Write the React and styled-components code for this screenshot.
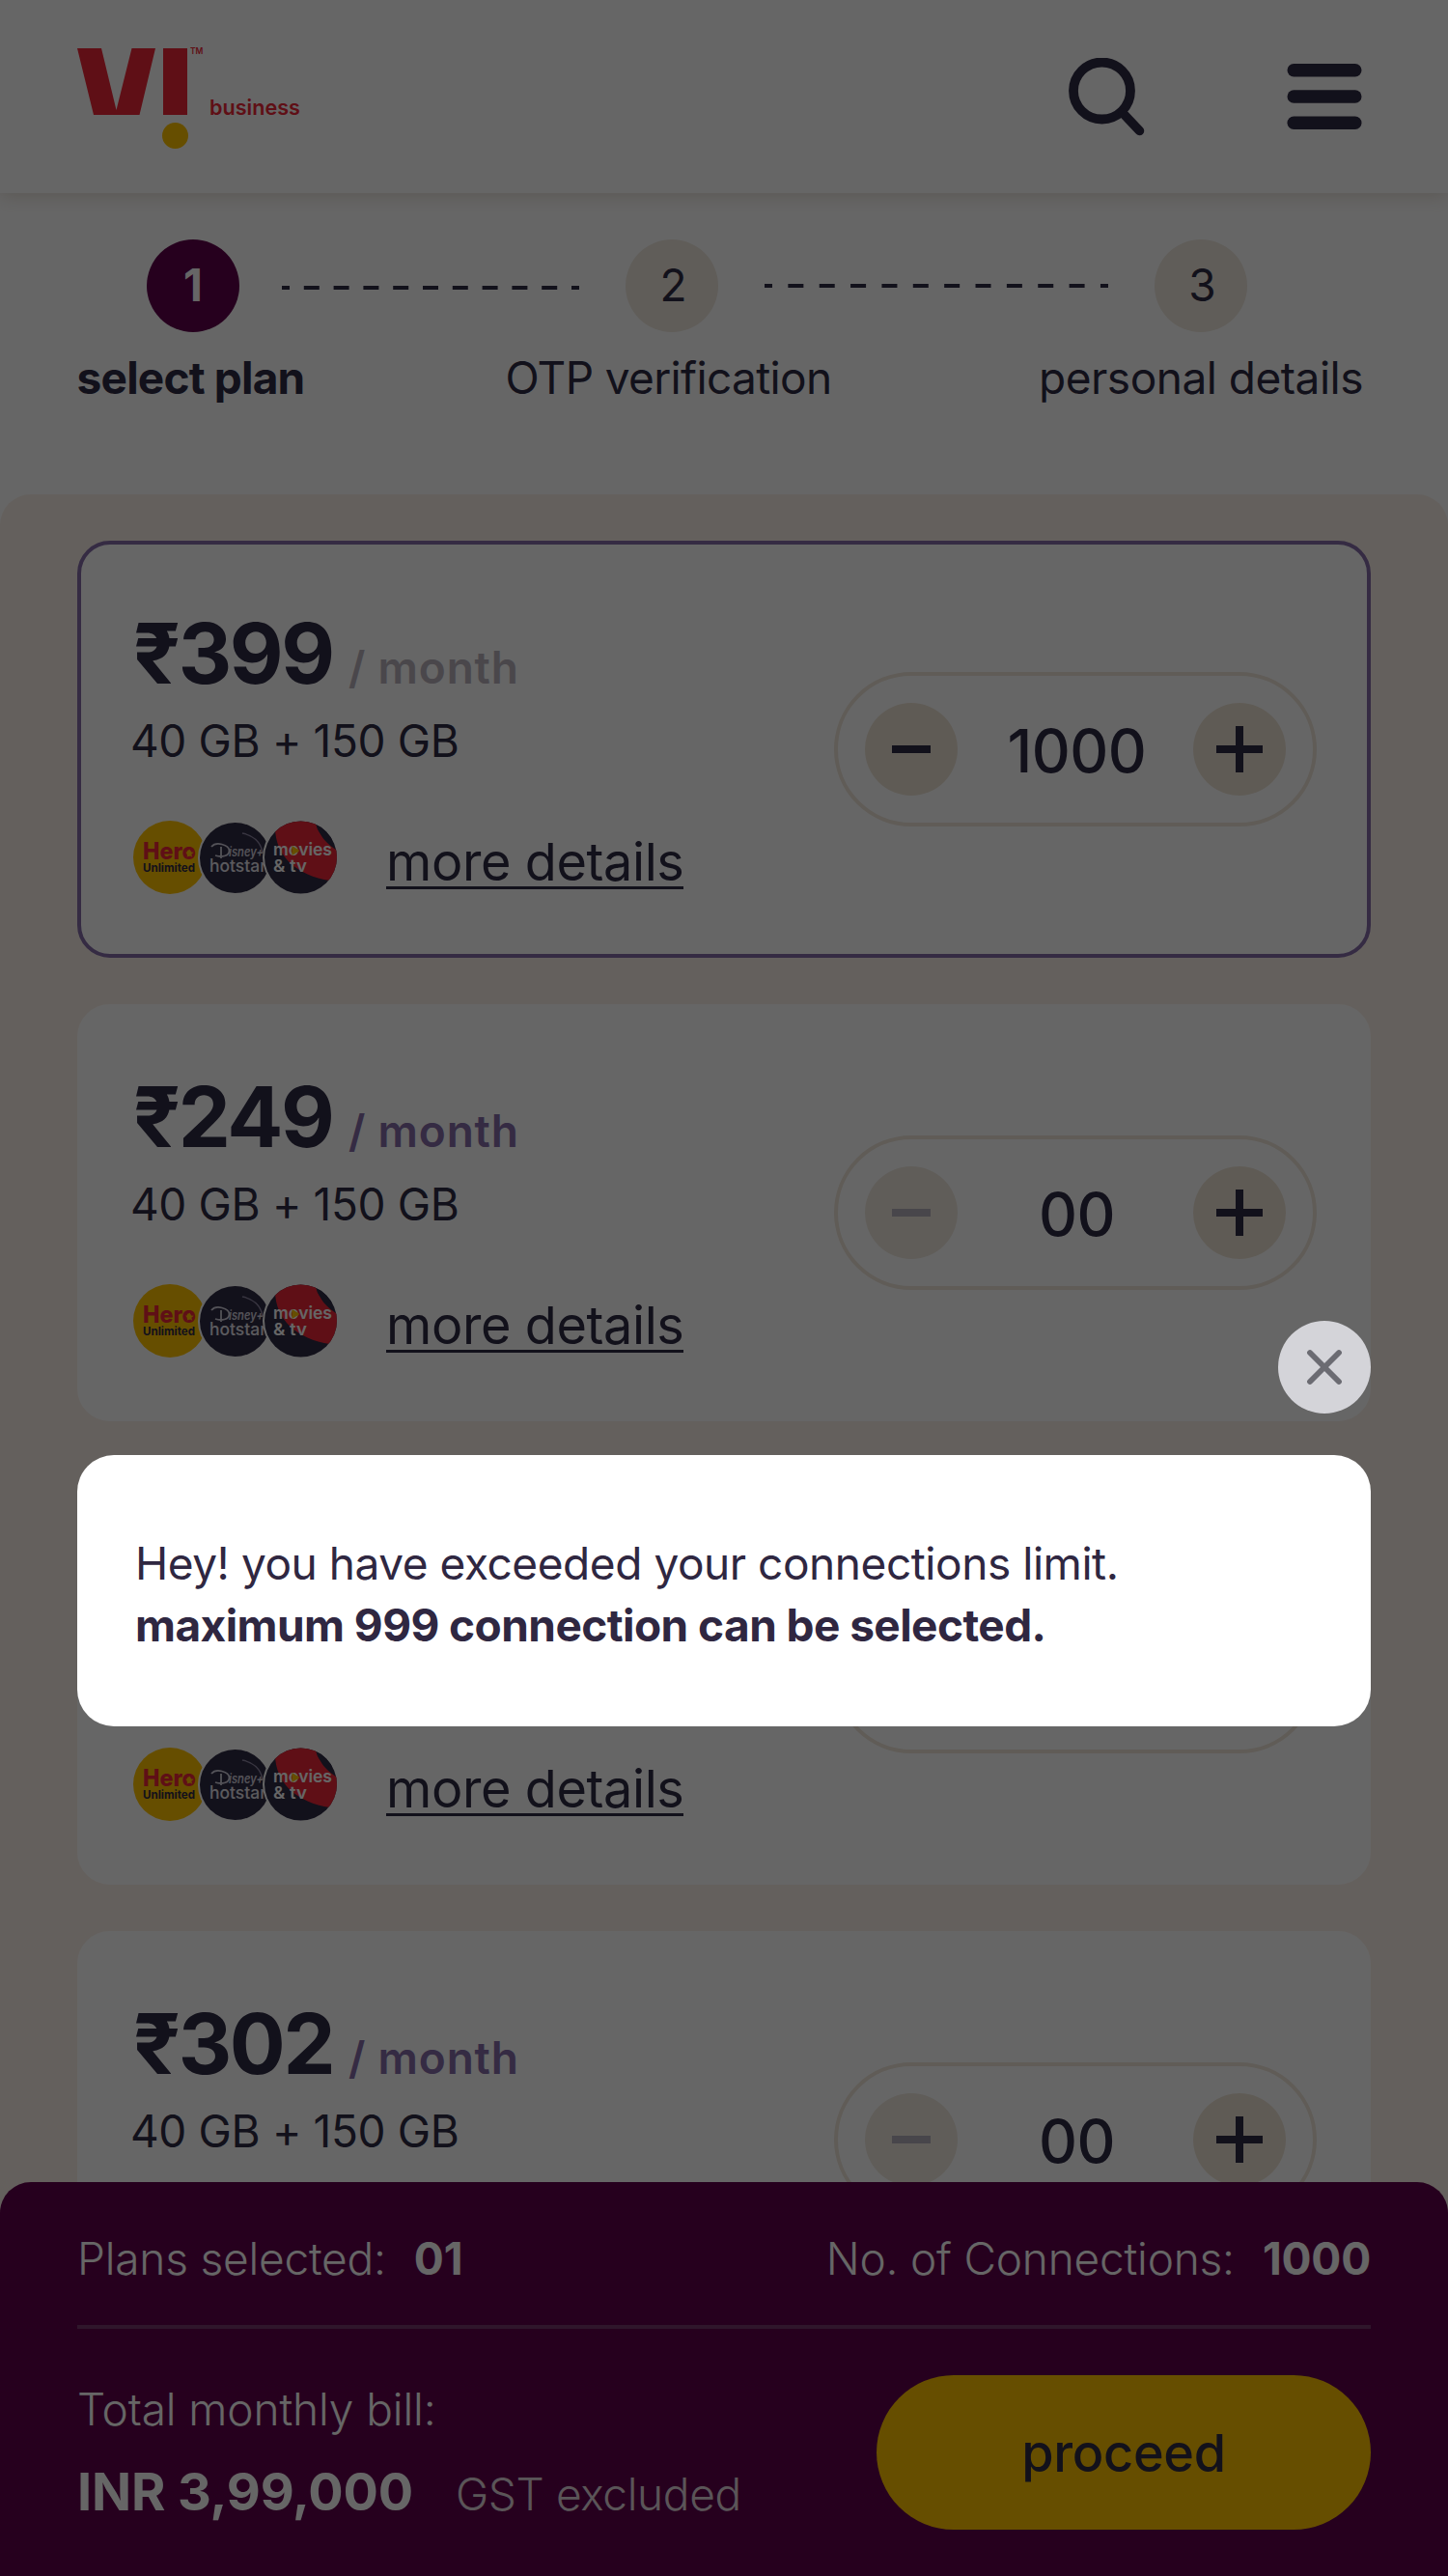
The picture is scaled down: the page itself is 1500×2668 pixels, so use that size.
import styled, { createGlobalStyle } from "styled-components";

const plans = [
  { price: "399", count: "1000", selected: true },
  { price: "249", count: "00" },
  { price: "299", count: "00" },
  { price: "302", count: "00" },
];

const App = () => {
  return (
    <Page>
      <GlobalStyle />
      <Header>
        <Logo />
        <HeaderIcons>
          <SearchIcon />
          <MenuIcon />
        </HeaderIcons>
      </Header>
      <Steps>
        <Step $width={240}>
          <StepCircle $active>1</StepCircle>
          <StepLabel $bold $spacing={-0.8} $shift={-5}>select plan</StepLabel>
        </Step>
        <Dashes width={308} gap={14.8} margin="48px -76px 0 -28px" />
        <Step $width={344}>
          <StepCircle>2</StepCircle>
          <StepLabel $spacing={-0.65} $shift={-7}>OTP verification</StepLabel>
        </Step>
        <Dashes width={356} gap={16.36} margin="46px -76px 0" />
        <Step $width={344}>
          <StepCircle>3</StepCircle>
          <StepLabel $spacing={-0.5} $shift={0}>personal details</StepLabel>
        </Step>
      </Steps>
      <PlanList>
        {plans.map((plan) => (
          <PlanCard key={plan.price} plan={plan} />
        ))}
      </PlanList>
      <Summary>
        <SummaryRow>
          <SummaryText $spacing={-0.2}>Plans selected:<SummaryValue>01</SummaryValue></SummaryText>
          <SummaryText $spacing={-0.2}>No. of Connections:<SummaryValue>1000</SummaryValue></SummaryText>
        </SummaryRow>
        <BillRow>
          <div>
            <BillLabel>Total monthly bill:</BillLabel>
            <BillLine>
              <BillTotal>INR 3,99,000</BillTotal>
              <BillNote>GST excluded</BillNote>
            </BillLine>
          </div>
          <ProceedButton>proceed</ProceedButton>
        </BillRow>
      </Summary>
      <Overlay>
        <CloseButton>
          <svg width="40" height="40" viewBox="0 0 40 40">
            <path d="M5 5 L35 35 M35 5 L5 35" stroke="#6b6b72" strokeWidth="5.8" strokeLinecap="round" />
          </svg>
        </CloseButton>
        <Modal>
          <ModalText $spacing={-0.45}>Hey! you have exceeded your connections limit.</ModalText>
          <ModalText $bold $spacing={-0.56}>maximum 999 connection can be selected.</ModalText>
        </Modal>
      </Overlay>
    </Page>
  );
};

export default App;

const PlanCard = ({ plan }) => {
  return (
    <Card $selected={plan.selected}>
      <div>
        <PriceLine>
          <Price>₹{plan.price}</Price>
          <Period $muted={plan.selected}>/ month</Period>
        </PriceLine>
        <Data>40 GB + 150 GB</Data>
        <Perks>
          <PerkBadges />
          <MoreLink>more details</MoreLink>
        </Perks>
      </div>
      <Stepper>
        <RoundButton $disabled={!plan.selected}>
          <svg width="48" height="48">
            <path d="M4 24 H44" stroke="currentColor" strokeWidth="8" />
          </svg>
        </RoundButton>
        <Count>{plan.count}</Count>
        <RoundButton>
          <svg width="48" height="48">
            <path d="M0 24 H48 M24 0 V48" stroke="currentColor" strokeWidth="8" />
          </svg>
        </RoundButton>
      </Stepper>
    </Card>
  );
};

const Logo = () => (
  <LogoSvg width="240" height="110" viewBox="80 48 240 110">
    <path d="M80 50 H105 L120.5 114 L136.5 50 H161 L144.5 119 H97 Z" fill="#ee2737" />
    <rect x="169" y="50" width="25" height="69" fill="#ee2737" />
    <circle cx="181.5" cy="140.5" r="13.5" fill="#ffc300" />
    <text x="197" y="56" fontSize="8.5" fontWeight="600" fill="#ee2737">TM</text>
    <text x="217" y="119" fontSize="22" fontWeight="600" fill="#ee2737" textLength="94" lengthAdjust="spacingAndGlyphs">business</text>
  </LogoSvg>
);

const SearchIcon = () => (
  <svg width="80" height="82" viewBox="0 0 80 82" fill="none" stroke="#2f2b44">
    <circle cx="34.5" cy="34" r="29.5" strokeWidth="9.8" />
    <path d="M56 57 L73.5 75.5" strokeWidth="9.5" strokeLinecap="round" />
  </svg>
);

const MenuIcon = () => (
  <svg width="78" height="68" viewBox="0 0 78 68" fill="#2f2b44">
    <rect x="0.5" y="0" width="77" height="13.5" rx="6.7" />
    <rect x="0.5" y="27.2" width="77" height="13.5" rx="6.7" />
    <rect x="0.5" y="54.5" width="77" height="13.5" rx="6.7" />
  </svg>
);

const Dashes = ({ width, gap, margin }) => (
  <DashSvg width={width} height="4" $margin={margin}>
    <path
      d={`M0 2 H${width}`}
      stroke="#2f2b44"
      strokeWidth="4"
      strokeDasharray={`16 ${gap}`}
      strokeDashoffset="8"
    />
  </DashSvg>
);

const PerkBadges = () => (
  <BadgeSvg width="212" height="78" viewBox="0 0 212 78">
    <defs>
      <clipPath id="movies"><circle cx="173.5" cy="39" r="37.5" /></clipPath>
      <clipPath id="disney"><circle cx="105.5" cy="39.5" r="36.5" /></clipPath>
    </defs>
    <circle cx="38" cy="39" r="38" fill="#ffc300" />
    <text x="10" y="41" fontSize="24" fontWeight="800" fill="#ee2737" textLength="55" lengthAdjust="spacingAndGlyphs">Hero</text>
    <path d="M58.4 30.5 l1.2 3 3.2 .2 -2.5 2 .9 3 -2.8 -1.7 -2.7 1.7 .9 -3 -2.5 -2 3.2 -.2z" fill="#ffc300" />
    <text x="10" y="53.5" fontSize="12" fontWeight="700" fill="#2f2b44" textLength="54" lengthAdjust="spacingAndGlyphs">Unlimited</text>
    <circle cx="105.5" cy="39.5" r="38.5" fill="#fff" />
    <circle cx="105.5" cy="39.5" r="36.5" fill="#2f2b44" />
    <g clipPath="url(#disney)">
      <path d="M113 14 C124 16 132 23 134 34" fill="none" stroke="#8d86a3" strokeWidth="1.5" />
      <path d="M81 28 C86 22 99 26 99.5 32 C99.5 38 91 39 85 37 M91 28 V40" fill="none" stroke="#d0cedb" strokeWidth="1.8" />
      <text x="99" y="38" fontSize="13" fontWeight="600" fontStyle="italic" fill="#d0cedb" textLength="36" lengthAdjust="spacingAndGlyphs">isney+</text>
      <text x="79" y="54" fontSize="18" fontWeight="500" fill="#e4e2ea" textLength="59" lengthAdjust="spacingAndGlyphs">hotstar</text>
    </g>
    <circle cx="173.5" cy="39" r="39.5" fill="#fff" />
    <circle cx="173.5" cy="39" r="37.5" fill="#2f2b44" />
    <g clipPath="url(#movies)">
      <path d="M147 8 C147 38 170 58 204 63 L214 58 V34 C200 24 194 20 188 0 H147 Z" fill="#ee2737" />
      <path d="M189 0 C189 13 197 21 212 22 V0 Z" fill="#2f2b44" />
    </g>
    <g fill="#fff" fontWeight="600">
      <text x="145" y="37" fontSize="18" textLength="61" lengthAdjust="spacingAndGlyphs">movies</text>
      <text x="145" y="53.5" fontSize="17" textLength="35" lengthAdjust="spacingAndGlyphs">&amp; tv</text>
    </g>
    <path d="M164.5 27 L172.5 32 L164.5 37 Z" fill="#ffc300" />
  </BadgeSvg>
);

const GlobalStyle = createGlobalStyle`
  * {
    box-sizing: border-box;
  }
  body {
    margin: 0;
    font-family: Inter, "Liberation Sans", sans-serif;
    color: #2f2b44;
    background: #666;
  }
`;

const Page = styled.div`
  position: relative;
  width: 1500px;
  height: 2668px;
  overflow: hidden;
  background: #fff;
`;

const Header = styled.header`
  display: flex;
  justify-content: space-between;
  height: 200px;
  padding: 48px 89px 0 80px;
  box-shadow: 0 2px 18px rgba(150, 120, 90, 0.3);
`;

const LogoSvg = styled.svg`
  display: block;
`;

const HeaderIcons = styled.div`
  display: flex;
  gap: 146px;
  padding-top: 12px;
  svg:last-child {
    margin-top: 6px;
  }
`;

const Steps = styled.div`
  display: flex;
  height: 312px;
  padding: 48px 84px 0 80px;
`;

const Step = styled.div`
  display: flex;
  flex-direction: column;
  align-items: center;
  width: ${(p) => p.$width}px;
  flex: none;
`;

const StepCircle = styled.div`
  width: 96px;
  height: 96px;
  padding-left: ${(p) => (p.$active ? 0 : 3)}px;
  border-radius: 50%;
  line-height: 95px;
  text-align: center;
  font-size: 46px;
  font-weight: ${(p) => (p.$active ? 700 : 400)};
  color: ${(p) => (p.$active ? "#fff" : "inherit")};
  background: ${(p) => (p.$active ? "#5f004b" : "#efe8de")};
`;

const StepLabel = styled.div`
  margin-top: 19px;
  margin-left: ${(p) => p.$shift}px;
  line-height: 56px;
  font-size: 46px;
  font-weight: ${(p) => (p.$bold ? 700 : 400)};
  letter-spacing: ${(p) => p.$spacing}px;
  white-space: nowrap;
`;

const DashSvg = styled.svg`
  flex: none;
  margin: ${(p) => p.$margin};
`;

const PlanList = styled.main`
  display: flex;
  flex-direction: column;
  gap: 48px;
  padding: 48px 80px;
  border-radius: 32px 32px 0 0;
  background: #fbf1e9;
`;

const Card = styled.section`
  display: flex;
  justify-content: space-between;
  flex: none;
  height: 432px;
  padding: 73px 52px 0 54px;
  border: 4px solid ${(p) => (p.$selected ? "#846ca8" : "#fff")};
  border-radius: 34px;
  background: #fff;
`;

const PriceLine = styled.div`
  display: flex;
  align-items: baseline;
  height: 80px;
  line-height: 80px;
`;

const Price = styled.div`
  width: 223px;
  font-size: 86px;
  font-weight: 750;
  letter-spacing: -2.4px;
`;

const Period = styled.div`
  font-size: 46px;
  font-weight: 600;
  letter-spacing: 0.8px;
  color: ${(p) => (p.$muted ? "#b8b2bc" : "#846ca8")};
`;

const Data = styled.div`
  margin: 22px 0 0 -3px;
  line-height: 56px;
  font-size: 46px;
  letter-spacing: -0.35px;
`;

const Perks = styled.div`
  display: flex;
  margin-top: 54px;
`;

const BadgeSvg = styled.svg`
  flex: none;
`;

const MoreLink = styled.div`
  margin-left: 50px;
  height: 72px;
  line-height: 87px;
  font-size: 54px;
  letter-spacing: -0.4px;
  border-bottom: 3px solid #2f2b44;
  white-space: nowrap;
`;

const Stepper = styled.div`
  display: flex;
  align-items: center;
  justify-content: space-between;
  width: 500px;
  height: 160px;
  margin-top: 59px;
  padding: 0 28px;
  border: 4px solid #efe6da;
  border-radius: 80px;
`;

const RoundButton = styled.div`
  display: flex;
  align-items: center;
  justify-content: center;
  width: 96px;
  height: 96px;
  border-radius: 50%;
  color: ${(p) => (p.$disabled ? "#b5aebb" : "#2f2b44")};
  background: ${(p) => (p.$disabled ? "#efe8de" : "#eee4d5")};
`;

const Count = styled.div`
  margin: 4px 0 0 3px;
  font-size: 62px;
  font-weight: 450;
  letter-spacing: -0.5px;
  line-height: 76px;
`;

const Summary = styled.footer`
  position: absolute;
  left: 0;
  right: 0;
  bottom: 0;
  height: 408px;
  padding: 0 80px;
  border-radius: 32px 32px 0 0;
  color: #fff;
  background: #5f004b;
`;

const SummaryRow = styled.div`
  display: flex;
  justify-content: space-between;
  height: 152px;
  padding-top: 51px;
  border-bottom: 4px solid #77386d;
`;

const SummaryText = styled.div`
  font-size: 46px;
  line-height: 56px;
  font-weight: 300;
  letter-spacing: ${(p) => p.$spacing}px;
`;

const SummaryValue = styled.span`
  margin-left: 29px;
  font-weight: 700;
`;

const BillRow = styled.div`
  display: flex;
  justify-content: space-between;
  padding-top: 48px;
`;

const BillLabel = styled.div`
  margin-top: 7px;
  line-height: 56px;
  font-size: 46px;
  font-weight: 300;
  letter-spacing: -0.1px;
`;

const BillLine = styled.div`
  display: flex;
  align-items: baseline;
  margin-top: 26px;
  line-height: 64px;
`;

const BillTotal = styled.div`
  width: 392px;
  font-size: 54px;
  font-weight: 700;
  letter-spacing: -0.15px;
  white-space: nowrap;
`;

const BillNote = styled.div`
  font-size: 46px;
  font-weight: 300;
  letter-spacing: -0.35px;
  color: #e2d5dc;
`;

const ProceedButton = styled.div`
  width: 512px;
  height: 160px;
  border-radius: 80px;
  line-height: 162px;
  text-align: center;
  font-size: 54px;
  font-weight: 500;
  letter-spacing: -0.3px;
  color: #2f2b44;
  background: #ffc300;
`;

const Overlay = styled.div`
  position: absolute;
  inset: 0;
  display: flex;
  flex-direction: column;
  padding: 1368px 80px 0;
  background: rgba(0, 0, 0, 0.6);
`;

const CloseButton = styled.div`
  display: flex;
  align-items: center;
  justify-content: center;
  align-self: flex-end;
  width: 96px;
  height: 96px;
  border-radius: 50%;
  background: #d4d4d9;
`;

const Modal = styled.div`
  height: 281px;
  margin-top: 43px;
  padding: 80px 60px;
  border-radius: 38px;
  background: #fff;
`;

const ModalText = styled.div`
  line-height: 64px;
  font-size: 46px;
  font-weight: ${(p) => (p.$bold ? 700 : 400)};
  letter-spacing: ${(p) => p.$spacing}px;
  color: #2f2741;
  white-space: nowrap;
`;
